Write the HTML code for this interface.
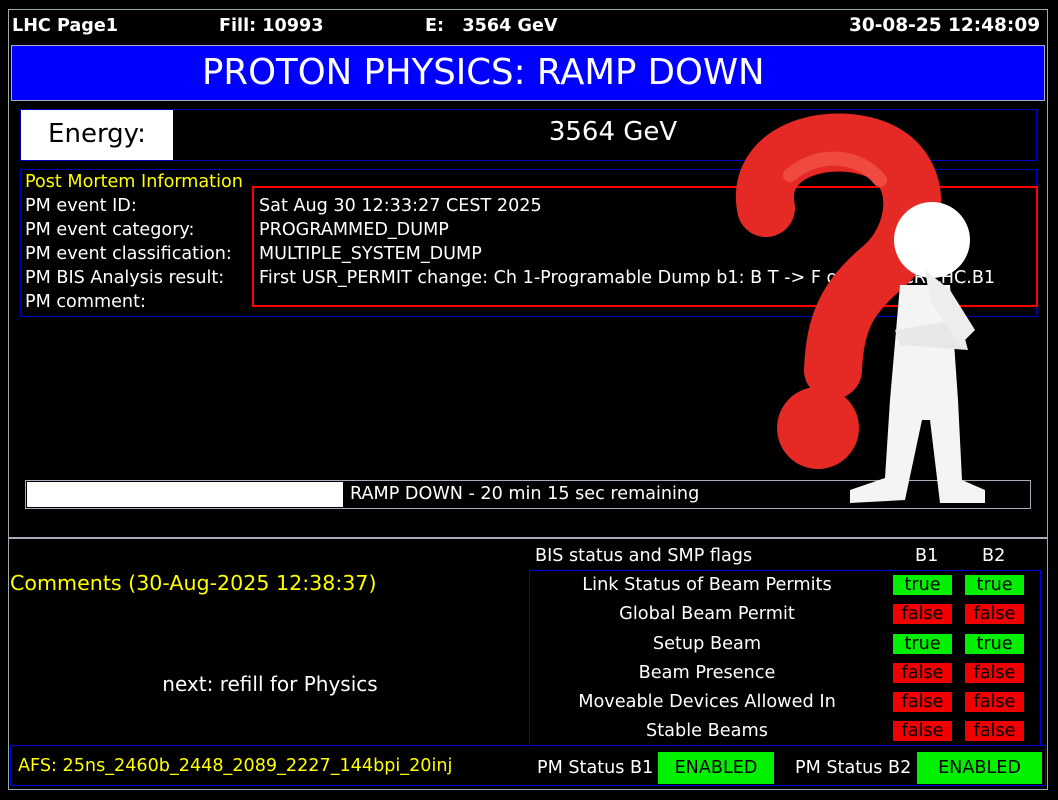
<!DOCTYPE html>
<html><head><meta charset="utf-8"><style>
body{margin:0;background:#000;width:1058px;height:800px;overflow:hidden;position:relative;font-family:"DejaVu Sans","Liberation Sans",sans-serif;color:#fff}
.a{position:absolute;white-space:nowrap}
.hd{font-weight:bold;font-size:17.6px;top:16px}
.r{font-size:17.6px;left:25px}
.v{font-size:17.6px;left:259px}
.bd{position:absolute;width:59px;height:20px;font-size:17.6px;text-align:center;line-height:20px;color:#000}
.t{background:#00f000}.f{background:#f00000}
.lb{font-size:17.7px;text-align:center;width:360px;left:527px}
</style></head><body>
<div class="a" style="left:8px;top:9px;width:1038px;height:779px;border:1px solid #9aa"></div>
<div class="a hd" style="left:12px">LHC Page1</div>
<div class="a hd" style="left:219px">Fill: 10993</div>
<div class="a hd" style="left:425px">E:&nbsp;&nbsp; 3564 GeV</div>
<div class="a hd" style="left:849px;font-size:18.5px;top:15px">30-08-25 12:48:09</div>
<div class="a" style="left:11px;top:45px;width:1034px;height:56px;background:#0000ff;border:1px solid #aac;box-sizing:border-box"></div>
<div class="a" style="left:202px;top:45px;width:561px;text-align:center;font-size:35.5px;line-height:56px">PROTON PHYSICS: RAMP DOWN</div>
<div class="a" style="left:20px;top:109px;width:1017px;height:52px;border:1px solid #0000c0;box-sizing:border-box"></div>
<div class="a" style="left:21px;top:110px;width:152px;height:50px;background:#fff;color:#000;font-size:26px;text-align:center;line-height:48px">Energy:</div>
<div class="a" style="left:500px;top:117px;width:226px;text-align:center;font-size:26px">3564 GeV</div>
<div class="a" style="left:20px;top:169px;width:1017px;height:148px;border:1px solid #0000c0;box-sizing:border-box"></div>
<div class="a" style="left:252px;top:186px;width:786px;height:121px;border:2px solid #f00;box-sizing:border-box"></div>
<div class="a r" style="top:172px;color:#ffff00">Post Mortem Information</div>
<div class="a r" style="top:196px">PM event ID:</div>
<div class="a r" style="top:220px">PM event category:</div>
<div class="a r" style="top:244px">PM event classification:</div>
<div class="a r" style="top:268px">PM BIS Analysis result:</div>
<div class="a r" style="top:292px">PM comment:</div>
<div class="a v" style="top:196px">Sat Aug 30 12:33:27 CEST 2025</div>
<div class="a v" style="top:220px">PROGRAMMED_DUMP</div>
<div class="a v" style="top:244px">MULTIPLE_SYSTEM_DUMP</div>
<div class="a v" style="top:268px">First USR_PERMIT change: Ch 1-Programable Dump b1: B T -&gt; F on CIB.CCR.LHC.B1</div>
<div class="a" style="left:25px;top:480px;width:1006px;height:29px;border:1px solid #aab;box-sizing:border-box"></div>
<div class="a" style="left:27px;top:482px;width:316px;height:25px;background:#fff"></div>
<div class="a" style="left:350px;top:484px;font-size:17.6px">RAMP DOWN - 20 min 15 sec remaining</div>
<svg class="a" style="left:0;top:0" width="1058" height="800">
<path d="M766 208 C755 150 830 130 878 150 C928 172 918 238 882 268 C847 298 835 322 833 370" fill="none" stroke="#e52a25" stroke-width="58" stroke-linecap="round"/>
<path d="M790 175 C820 150 860 155 880 180" fill="none" stroke="#f04a40" stroke-width="14" stroke-linecap="round"/>
<circle cx="818" cy="428" r="41" fill="#e52a25"/>
<circle cx="932" cy="240" r="38" fill="#fff"/>
<path d="M900 285 L950 285 L958 400 L962 480 L985 490 L985 503 L940 503 L930 420 L922 420 L905 500 L850 503 L850 490 L885 478 L890 400 Z" fill="#f4f4f4"/>
<path d="M895 330 L960 320 L968 350 L900 345 Z" fill="#e8e8e8"/>
<path d="M925 270 L950 290 L975 330 L960 345 L930 300 Z" fill="#ededed"/>
</svg>
<div class="a" style="left:8px;top:537px;width:1040px;height:2px;background:#aab"></div>
<div class="a" style="left:535px;top:546px;font-size:17.6px">BIS status and SMP flags</div>
<div class="a" style="left:915px;top:546px;font-size:17.6px">B1</div>
<div class="a" style="left:982px;top:546px;font-size:17.6px">B2</div>
<div class="a" style="left:529px;top:570px;width:512px;height:176px;border:1px solid #0000e0;box-sizing:border-box"></div>
<div class="a" style="left:10px;top:571px;font-size:20.6px;color:#ffff00">Comments (30-Aug-2025 12:38:37)</div>
<div class="a" style="left:60px;top:672px;width:420px;text-align:center;font-size:20px">next: refill for Physics</div>
<div class="a lb" style="top:575px">Link Status of Beam Permits</div>
<div class="a lb" style="top:604px">Global Beam Permit</div>
<div class="a lb" style="top:634px">Setup Beam</div>
<div class="a lb" style="top:663px">Beam Presence</div>
<div class="a lb" style="top:692px">Moveable Devices Allowed In</div>
<div class="a lb" style="top:721px">Stable Beams</div>
<div class="bd t" style="left:893px;top:575px">true</div><div class="bd t" style="left:965px;top:575px">true</div>
<div class="bd f" style="left:893px;top:604px">false</div><div class="bd f" style="left:965px;top:604px">false</div>
<div class="bd t" style="left:893px;top:634px">true</div><div class="bd t" style="left:965px;top:634px">true</div>
<div class="bd f" style="left:893px;top:663px">false</div><div class="bd f" style="left:965px;top:663px">false</div>
<div class="bd f" style="left:893px;top:692px">false</div><div class="bd f" style="left:965px;top:692px">false</div>
<div class="bd f" style="left:893px;top:721px">false</div><div class="bd f" style="left:965px;top:721px">false</div>
<div class="a" style="left:10px;top:745px;width:1036px;height:41px;border:1px solid #0000e0;box-sizing:border-box"></div>
<div class="a" style="left:18px;top:756px;font-size:17.6px;color:#ffff00">AFS: 25ns_2460b_2448_2089_2227_144bpi_20inj</div>
<div class="a" style="left:537px;top:758px;font-size:17.6px">PM Status B1</div>
<div class="a" style="left:658px;top:752px;width:116px;height:32px;background:#00f000;color:#000;font-size:17.6px;text-align:center;line-height:32px">ENABLED</div>
<div class="a" style="left:795px;top:758px;font-size:17.6px">PM Status B2</div>
<div class="a" style="left:917px;top:752px;width:125px;height:32px;background:#00f000;color:#000;font-size:17.6px;text-align:center;line-height:32px">ENABLED</div>
</body></html>
